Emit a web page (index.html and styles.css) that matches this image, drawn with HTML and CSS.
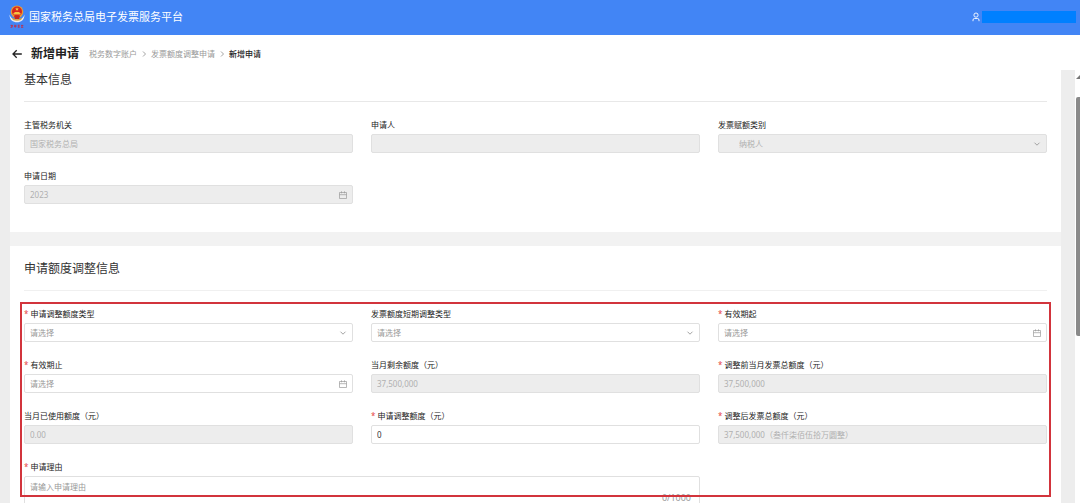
FILE: index.html
```html
<!DOCTYPE html>
<html lang="zh-CN">
<head>
<meta charset="utf-8">
<title>新增申请</title>
<link rel="stylesheet" href="styles.css">
</head>
<body>
<svg class="sprite" aria-hidden="true">
  <symbol id="calendar" viewBox="0 0 10 10"><path d="M1.500 2.500h7v6h-7zM1.500 4.700h7M3.500 1.300v2M6.500 1.300v2" fill="none" stroke="currentColor" stroke-width=".7"/></symbol>
  <symbol id="chevron" viewBox="0 0 10 10"><path d="M2.500 3.700L5 6.200l2.500-2.500" fill="none" stroke="currentColor" stroke-width=".9"/></symbol>
  <symbol id="crumb" viewBox="0 0 6 8"><path d="M2 1.500L4.500 4 2 6.500" fill="none" stroke="currentColor" stroke-width=".9"/></symbol>
</svg>
<header class="topbar">
  <svg class="emblem" viewBox="0 0 16 24" aria-hidden="true">
    <path d="M0.500 9.500C2 14 5 14.600 8 14.600s6-.6 7.500-5.100C15.500 15 12 17.300 8 17.300S.5 15 .5 9.500z" fill="#e9edf5"/>
    <path d="M2.500 12.800q5.500 2.800 11 0l-1.500 2.200q-4 1.500-8 0z" fill="#d9a441"/>
    <circle cx="8" cy="6.800" r="6.300" fill="#e99a35"/>
    <circle cx="8" cy="6.500" r="5" fill="#d8261c"/>
    <path d="M8 2.200l.6 1.200 1.300.1-1 .9.300 1.300L8 5.100l-1.200.6.300-1.300-1-.9 1.300-.1zM4.500 8h1V7h5v1h1v1.500h-7z" fill="#f6c343"/>
    <path d="M5 11h6l-1 3H6z" fill="#c8281f"/>
    <path d="M1.500 20.500h2.500M2.700 19.800v3M1.500 22.500l2.500-1M5 20.300h2.500M5 21.500h2.500M6.200 20v2.800M8.700 20.300h2M8.700 22h2.200M9.700 19.800v3M12 20.500h2.300M13 19.800v3M12 22.300h2.300" stroke="#b73253" stroke-width=".8" fill="none"/>
  </svg>
  <span class="brand">国家税务总局电子发票服务平台</span>
  <div class="user">
    <svg class="user-icon" viewBox="0 0 8 10" aria-hidden="true"><path d="M4 1a2.100 2.100 0 1 1 0 4.200A2.100 2.100 0 0 1 4 1zM1 9.200V8q0-1.500 1.500-1.500h3Q7 6.500 7 8v1.200" fill="none" stroke="#fff" stroke-width=".9"/></svg>
    <span class="user-name"></span>
  </div>
</header>
<div class="pagebar">
  <button class="back" type="button" aria-label="返回"><svg viewBox="0 0 10 10"><path d="M9.800 5H1M4.700 1.300L1 5l3.700 3.700" fill="none" stroke="currentColor" stroke-width="1.300"/></svg></button>
  <h1>新增申请</h1>
  <nav class="crumbs">
    <a href="#">税务数字账户</a><svg viewBox="0 0 6 8"><use href="#crumb"/></svg><a href="#">发票额度调整申请</a><svg viewBox="0 0 6 8"><use href="#crumb"/></svg><span class="current">新增申请</span>
  </nav>
</div>
<div class="viewport">
  <main class="content">
    <section class="card basic">
      <h2>基本信息</h2>
      <div class="fields">
        <div class="field"><label for="org">主管税务机关</label><div class="control"><input id="org" value="国家税务总局" disabled></div></div>
        <div class="field"><label for="person">申请人</label><div class="control"><input id="person" disabled></div></div>
        <div class="field"><label for="kind">发票赋额类别</label><div class="control"><select id="kind" class="indented" disabled><option>纳税人</option></select><svg><use href="#chevron"/></svg></div></div>
        <div class="field"><label for="date">申请日期</label><div class="control"><input id="date" value="2023" disabled><svg><use href="#calendar"/></svg></div></div>
      </div>
    </section>
    <section class="card adjust">
      <h2>申请额度调整信息</h2>
      <div class="fields">
        <div class="field"><label class="required" for="type">申请调整额度类型</label><div class="control"><select id="type"><option>请选择</option></select><svg><use href="#chevron"/></svg></div></div>
        <div class="field"><label for="short">发票额度短期调整类型</label><div class="control"><select id="short"><option>请选择</option></select><svg><use href="#chevron"/></svg></div></div>
        <div class="field"><label class="required" for="from">有效期起</label><div class="control"><input id="from" placeholder="请选择"><svg><use href="#calendar"/></svg></div></div>
        <div class="field"><label class="required" for="to">有效期止</label><div class="control"><input id="to" placeholder="请选择"><svg><use href="#calendar"/></svg></div></div>
        <div class="field"><label for="left">当月剩余额度（元）</label><div class="control"><input id="left" value="37,500,000" disabled></div></div>
        <div class="field"><label class="required" for="before">调整前当月发票总额度（元）</label><div class="control"><input id="before" value="37,500,000" disabled></div></div>
        <div class="field"><label for="used">当月已使用额度（元）</label><div class="control"><input id="used" value="0.00" disabled></div></div>
        <div class="field"><label class="required" for="amount">申请调整额度（元）</label><div class="control"><input id="amount" value="0"></div></div>
        <div class="field"><label class="required" for="after">调整后发票总额度（元）</label><div class="control"><input id="after" value="37,500,000（叁仟柒佰伍拾万圆整）" disabled></div></div>
        <div class="field wide"><label class="required" for="reason">申请理由</label><div class="control"><textarea id="reason" placeholder="请输入申请理由"></textarea><span class="count">0/1000</span></div></div>
        <div class="highlight"></div>
      </div>
    </section>
  </main>
  <div class="scrollbar" aria-hidden="true"><span class="arrow"></span><span class="thumb"></span></div>
</div>
</body>
</html>
```
FILE: styles.css
```css
* { box-sizing: border-box; }
body {
  margin: 0;
  height: 100vh;
  display: flex;
  flex-direction: column;
  overflow: hidden;
  background: #fff;
  color: #333;
  font: 8px/12px "Noto Sans", "Noto Sans CJK SC", sans-serif;
}
h1, h2 { margin: 0; }
.sprite { display: none; }

.topbar {
  flex: none;
  height: 35px;
  padding: 0 4px 2px 9px;
  display: flex;
  align-items: center;
  gap: 4px;
  background: #4285f5;
  color: #fff;
}
.emblem { width: 16px; height: 24px; }
.brand { font-size: 11px; line-height: 16px; }
.user { margin-left: auto; display: flex; align-items: center; gap: 2px; }
.user-icon { width: 8px; height: 10px; }
.user-name { width: 94px; height: 12px; background: #0080ff; }

.pagebar {
  flex: none;
  height: 35px;
  padding: 2px 12px 0;
  display: flex;
  align-items: center;
}
.back { width: 10px; height: 10px; padding: 0; border: 0; background: none; color: #222; }
.back svg { display: block; width: 10px; height: 10px; }
h1 { margin: 0 10px 0 9px; font-size: 12px; line-height: 18px; color: #222; }
.crumbs { display: flex; align-items: center; gap: 4px; color: #999; }
.crumbs a { color: inherit; text-decoration: none; }
.crumbs svg { width: 6px; height: 8px; }
.current { color: #222; font-weight: 500; }

.viewport { flex: 1; min-height: 0; display: flex; background: #ededed; }
.content { flex: 1; overflow: hidden; padding: 0 14px 0 10px; }
.card { padding: 0 14px 28px; background: #fff; }
.basic { padding-top: 1px; border-bottom: 14px solid #f2f2f2; }
.adjust { padding-top: 14px; }
h2 {
  padding-bottom: 12px;
  border-bottom: 1px solid #e8e8e8;
  font-size: 12px;
  line-height: 18px;
  font-weight: 400;
}
.adjust h2 { border-color: #f0f0f0; }

.fields {
  position: relative;
  padding-top: 17px;
  display: grid;
  grid-template-columns: repeat(3, minmax(0, 1fr));
  gap: 17px 18px;
}
.field { display: flex; flex-direction: column; gap: 3px; }
.wide { grid-column: span 2; }
label { color: #222; }
.required::before { content: "*"; color: #e64545; margin-right: 2px; }
.control { position: relative; display: flex; }
.control input, .control select, .control textarea {
  appearance: none;
  width: 100%;
  height: 19px;
  margin: 0;
  padding: 0 5px;
  border: 1px solid #e0e0e0;
  border-radius: 2px;
  background: #fff;
  color: #333;
  font: inherit;
}
.control select { color: #999; }
.control .indented { padding-left: 20px; }
.control input:disabled, .control select:disabled { background: #ededed; color: #b0b0b0; opacity: 1; }
.control ::placeholder { color: #999; opacity: 1; }
.control textarea { height: 38px; padding: 4px 5px; resize: none; }
.control svg { position: absolute; right: 5px; top: 5px; width: 10px; height: 10px; color: #999; pointer-events: none; }
.count { position: absolute; right: 9px; top: 16px; color: #999; font-size: 9px; }
.highlight {
  position: absolute;
  inset: 11px -4px 17px;
  border: 2px solid #d2343c;
  pointer-events: none;
}

.scrollbar { flex: none; width: 5px; padding: 5px 0 0 1px; background: #fff; overflow: hidden; }
.arrow { display: block; width: 8px; border: 4px solid transparent; border-top: 0; border-bottom-color: #777; }
.thumb { display: block; width: 8px; height: 239px; margin-top: 18px; border-radius: 2px; background: #8a8a8a; }
```
